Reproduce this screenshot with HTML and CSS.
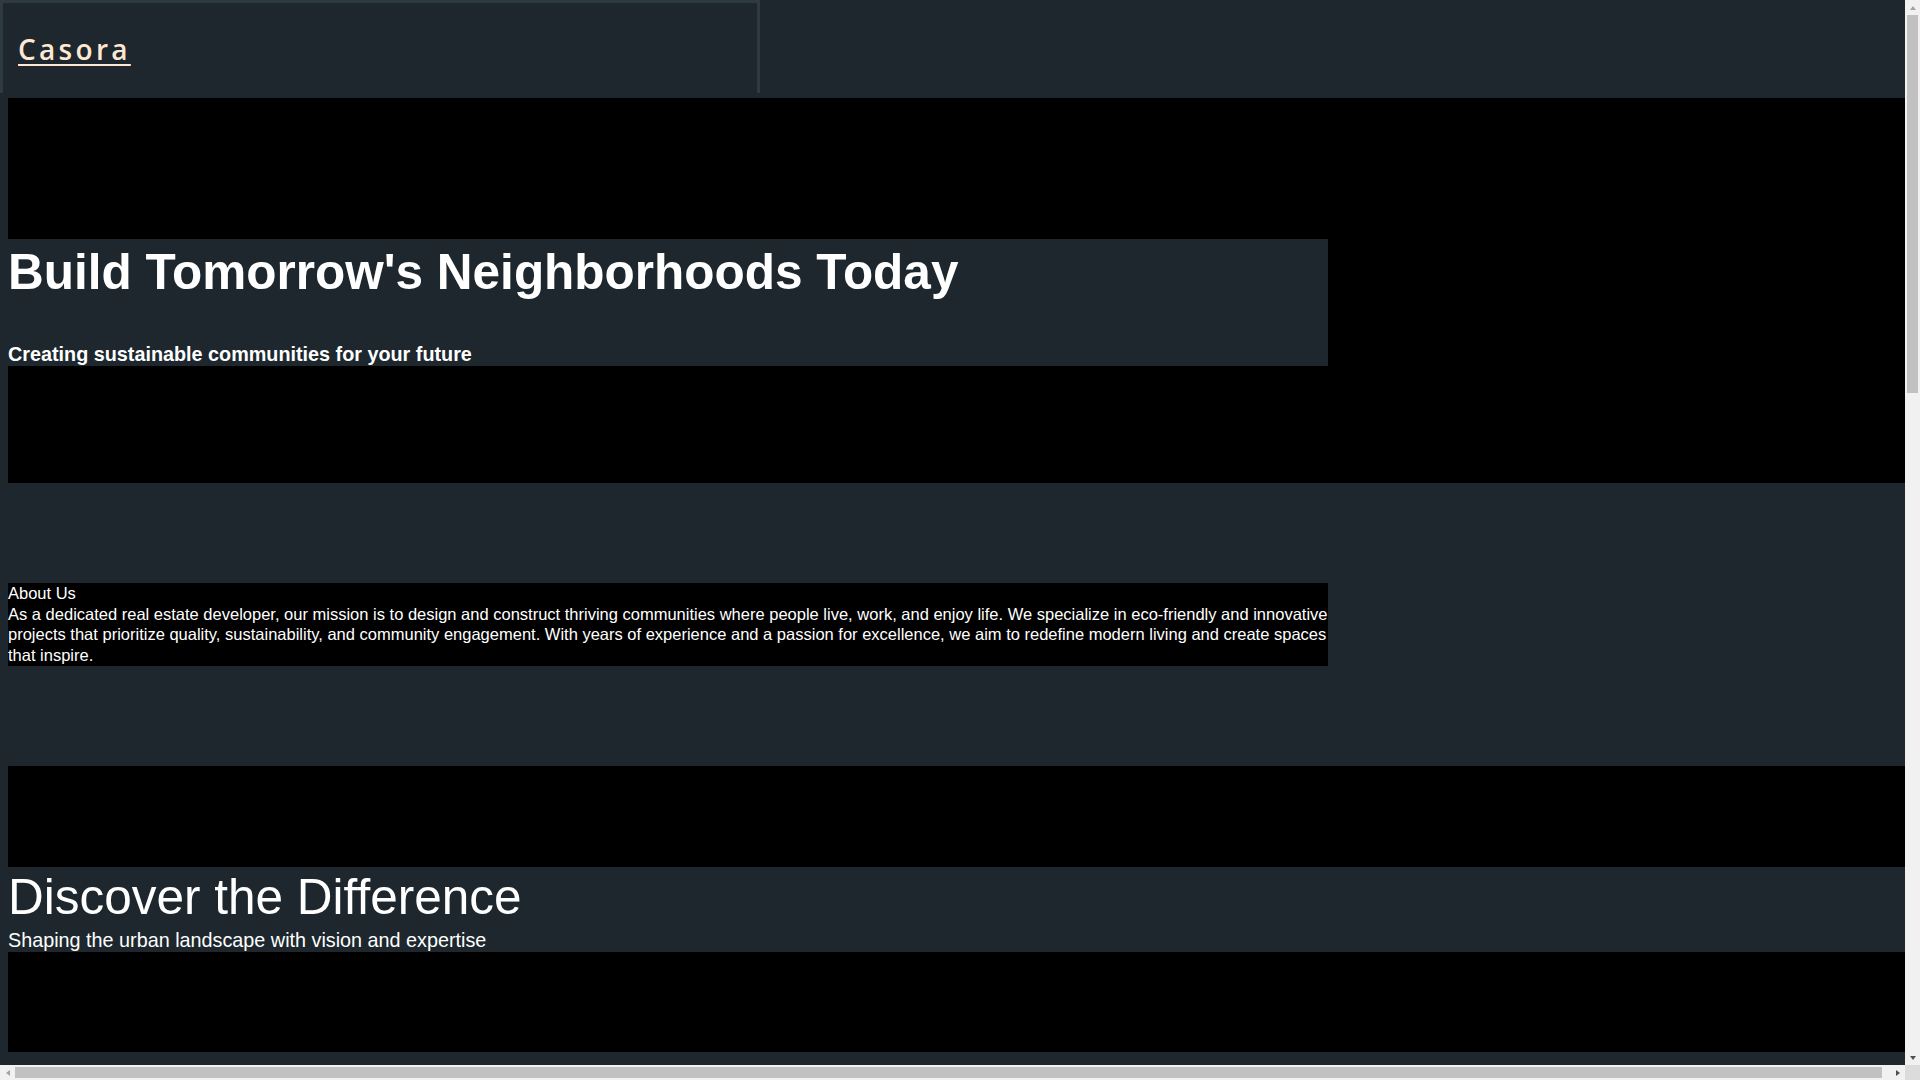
FILE: index.html
```html
<!DOCTYPE html>
<html lang="en">
<head>
<meta charset="utf-8">
<title>Casora</title>
<link rel="stylesheet" href="styles.css">
</head>
<body>
<header class="site-header">
  <a class="brand" href="#">Casora</a>
</header>
<main class="page">
  <section class="hero">
    <div class="media media-top"></div>
    <div class="hero-text">
      <h1 class="hero-title">Build Tomorrow's Neighborhoods Today</h1>
      <p class="hero-sub">Creating sustainable communities for your future</p>
    </div>
    <div class="media media-bottom"></div>
  </section>
  <section class="about">
    <h2 class="about-title">About Us</h2>
    <p class="about-text">As a dedicated real estate developer, our mission is to design and construct thriving communities where people live, work, and enjoy life. We specialize in eco-friendly and innovative projects that prioritize quality, sustainability, and community engagement. With years of experience and a passion for excellence, we aim to redefine modern living and create spaces that inspire.</p>
  </section>
  <section class="discover">
    <div class="band band-a"></div>
    <h2 class="discover-title">Discover the Difference</h2>
    <p class="discover-sub">Shaping the urban landscape with vision and expertise</p>
    <div class="band band-b"></div>
    <h2 class="discover-title next-title">Our Projects</h2>
  </section>
</main>

<div class="scrollbar scrollbar-v" aria-hidden="true">
  <span class="sb-btn"><svg viewBox="0 0 8 8" width="8" height="8"><path d="M4 2L7 6H1Z" fill="#a3a3a3"/></svg></span>
  <span class="sb-track sb-track-v"><span class="sb-thumb sb-thumb-v"></span></span>
  <span class="sb-btn"><svg viewBox="0 0 8 8" width="8" height="8"><path d="M4 6L7 2H1Z" fill="#505050"/></svg></span>
</div>
<div class="scrollbar scrollbar-h" aria-hidden="true">
  <span class="sb-btn"><svg viewBox="0 0 8 8" width="8" height="8"><path d="M2 4L6 1V7Z" fill="#a3a3a3"/></svg></span>
  <span class="sb-track sb-track-h"><span class="sb-thumb sb-thumb-h"></span></span>
  <span class="sb-btn"><svg viewBox="0 0 8 8" width="8" height="8"><path d="M6 4L2 1V7Z" fill="#505050"/></svg></span>
</div>
<div class="scrollbar-corner" aria-hidden="true"></div>
</body>
</html>
```
FILE: styles.css
```css
html {
  background: #1d272d;
}
body {
  margin: 0;
  background: #1d272d;
  color: #ffffff;
  font-family: "Liberation Sans", Arial, sans-serif;
  font-size: 16.5px;
  overflow: hidden;
}
.site-header {
  box-sizing: border-box;
  width: 760px;
  height: 93px;
  display: flex;
  align-items: center;
  padding-left: 15px;
  border: 3px solid #2e3a42;
  border-bottom: 0;
  background: #1d272d;
}
.brand {
  font-family: "Open Sans", "DejaVu Sans", sans-serif;
  font-size: 28px;
  font-weight: 600;
  line-height: 1;
  letter-spacing: 3.3px;
  color: #ffe8d2;
  text-decoration: underline;
  text-decoration-thickness: 2px;
  text-underline-offset: 4px;
  margin-top: 2px;
}
.page {
  padding: 5px 0 0 8px;
}
.hero {
  width: 100vw;
  background: #000000;
}
.media-top {
  height: 141px;
}
.media-bottom {
  height: 117px;
}
.hero-text {
  width: 1320px;
  height: 127px;
  background: #1d272d;
  overflow: hidden;
}
.hero-title {
  margin: 4px 0 0;
  font-size: 49.5px;
  line-height: 57px;
  font-weight: 700;
  white-space: nowrap;
}
.hero-sub {
  margin: 43px 0 0;
  font-size: 19.8px;
  line-height: 23px;
  font-weight: 700;
}
.about {
  width: 1320px;
  margin-top: 100px;
  background: #000000;
  line-height: 1.25;
}
.about-title {
  margin: 0;
  font-size: 16.5px;
  font-weight: 400;
}
.about-text {
  margin: 0;
}
.discover {
  margin-top: 100px;
}
.band {
  width: 100vw;
  background: #000000;
}
.band-a {
  height: 101px;
}
.band-b {
  height: 100px;
}
.discover-title {
  margin: 0;
  padding-top: 1px;
  font-size: 49.5px;
  line-height: 57px;
  font-weight: 400;
}
.discover-sub {
  margin: 4px 0 0;
  font-size: 19.8px;
  line-height: 23px;
}
.next-title {
  padding-top: 6px;
}

/* browser scrollbars as they appear in the capture */
.scrollbar {
  position: fixed;
  display: flex;
  background: #f1f1f1;
  z-index: 10;
}
.scrollbar-v {
  top: 0;
  right: 0;
  width: 15px;
  height: calc(100vh - 15px);
  flex-direction: column;
}
.scrollbar-h {
  left: 0;
  bottom: 0;
  height: 15px;
  width: calc(100vw - 15px);
  flex-direction: row;
}
.scrollbar-corner {
  position: fixed;
  right: 0;
  bottom: 0;
  width: 15px;
  height: 15px;
  background: #dcdcdc;
  z-index: 10;
}
.sb-btn {
  flex: 0 0 15px;
  width: 15px;
  height: 15px;
  display: flex;
  align-items: center;
  justify-content: center;
}
.sb-track {
  flex: 1;
  display: flex;
}
.sb-track-v {
  flex-direction: column;
  padding: 0 2px;
}
.sb-track-h {
  flex-direction: row;
  padding: 2px 0;
}
.sb-thumb {
  background: #c1c1c1;
}
.sb-thumb-v {
  height: 378px;
}
.sb-thumb-h {
  width: calc(100% - 8px);
}
```
